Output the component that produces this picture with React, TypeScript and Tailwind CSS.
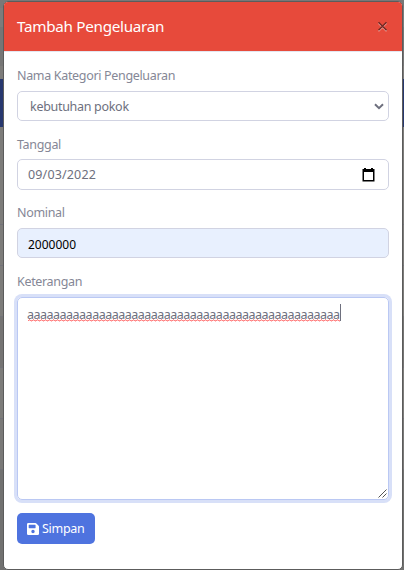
import React from 'react';

const label = 'block h-[20px] whitespace-nowrap text-[12.5px] leading-[20px] tracking-[-0.33px] text-[#858796]';

function Backdrop() {
  return (
    <div className="absolute inset-0 flex flex-col bg-[#7d7c7a]">
      <div className="h-[8px] bg-[#787878]" />
      <div className="h-[19px] bg-[#7c7c7c]" />
      <div className="h-[39px] bg-[#767676]" />
      <div className="h-[13px] bg-[#7d7c7a]" />
      <div className="h-[48px] bg-[#27386f]" />
      <div className="h-[98px] border-b border-[#73737a]" />
      <div className="h-[41px] border-b border-[#73737a]" />
      <div className="h-[51px] border-b border-[#73737a]" />
      <div className="h-[51px] border-b border-[#73737a] bg-[#757473]" />
      <div className="h-[51px] border-b border-[#73737a]" />
      <div className="h-[51px] border-b border-[#73737a] bg-[#7a7978]" />
      <div className="grow bg-[#717170]" />
    </div>
  );
}

function Squiggle() {
  return (
    <svg className="absolute top-[21px] left-[10px]" width="312" height="3">
      <defs>
        <pattern id="squiggle" width="4" height="3" patternUnits="userSpaceOnUse">
          <path d="M0 1.9 1 .9 2 .9 3 1.9 4 1.9" fill="none" stroke="#ff4a4a" strokeWidth="0.9" />
        </pattern>
      </defs>
      <rect width="312" height="3" fill="url(#squiggle)" />
    </svg>
  );
}

export default function App() {
  return (
    <div className="relative h-[570px] w-[404px] overflow-hidden font-['Noto_Sans','Open_Sans',sans-serif]">
      <Backdrop />
      <div className="relative pt-[1px] pl-[3px]">
        <div className="h-[569px] w-[400px] overflow-hidden rounded-[5px] border border-[#5c5c5c] bg-white">
          <header className="flex h-[50px] items-center justify-between border-b border-[#e3e6f0] bg-[#e74a3b] pr-[14px] pl-[13px] text-white">
            <h1 className="pb-[2px] text-[15.25px] leading-6 tracking-[-0.3px] whitespace-nowrap">Tambah Pengeluaran</h1>
            <svg width="11" height="11" viewBox="0 0 11 11" fill="none">
              <path d="M1.5 2.2 9.5 10.2M9.5 2.2 1.5 10.2" stroke="#fff" strokeOpacity=".55" strokeWidth="1.3" />
              <path d="M1.5 1.2 9.5 9.2M9.5 1.2 1.5 9.2" stroke="#742a25" strokeWidth="1.5" />
            </svg>
          </header>
          <form className="flex flex-col px-[13px] pt-[14px]">
            <span className={label}>Nama Kategori Pengeluaran</span>
            <div className="mt-[5px] flex h-[30px] items-center justify-between rounded-[5px] border border-[#d1d3e2] pr-[4px] pl-[12px] text-[12.5px] tracking-[-0.3px] text-[#6e707e]">
              <span className="pt-[2px]">kebutuhan pokok</span>
              <svg width="10" height="7" viewBox="0 0 10 7" fill="none">
                <path d="M1 1.2 5 5.2 9 1.2" stroke="#6e707e" strokeWidth="2" />
              </svg>
            </div>
            <span className={`${label} mt-[14px]`}>Tanggal</span>
            <div className="mt-[4px] flex h-[31px] items-center justify-between rounded-[5px] border border-[#d1d3e2] pr-[13px] pl-[10px] text-[12.5px] tracking-[0.15px] text-[#6e707e]">
              <span className="pt-[2px]">09/03/2022</span>
              <svg width="13" height="14" viewBox="0 0 13 14">
                <path d="M2 0h2v1h5V0h2v1h1.5v12.5H.5V1H2zM2 4v8h9V4z" fill="#000" fillRule="evenodd" />
              </svg>
            </div>
            <span className={`${label} mt-[13px]`}>Nominal</span>
            <div className="mt-[5px] flex h-[30px] items-center rounded-[5px] border border-[#d1d3e2] bg-[#e8f0fe] pt-[3px] pl-[10px] text-[12px] text-black">
              <span>2000000</span>
            </div>
            <span className={`${label} mt-[14px]`}>Keterangan</span>
            <div className="relative mt-[5px] h-[203px] rounded-[5px] border border-[#bac8f3] pt-[6px] pl-[9px] text-[12.5px] leading-[20px] tracking-[-0.5px] text-[#6e707e] shadow-[0_0_0_3px_#d8e0f8]">
              <div className="h-[17px] w-[314px] border-r border-[#6e707e] leading-[21px] whitespace-nowrap">
                {'a'.repeat(48)}
              </div>
              <Squiggle />
              <svg className="absolute right-[1px] bottom-[1px]" width="9" height="9" viewBox="0 0 9 9">
                <path d="M.5 8.5 8.5.5M4.5 8.5 8.5 4.5" stroke="#555" />
              </svg>
            </div>
            <button type="button" className="mt-[13px] flex h-[31px] w-[78px] items-center rounded-[5px] bg-[#4e73df] pl-[10px] text-[12.5px] tracking-[-0.3px] text-white">
              <svg width="12" height="12" viewBox="0 0 448 448">
                <path fill="#fff" fillRule="evenodd" d="M434 98 350 14A48 48 0 0 0 316 0H48A48 48 0 0 0 0 48v352a48 48 0 0 0 48 48h352a48 48 0 0 0 48-48V132a48 48 0 0 0-14-34zM224 384a64 64 0 1 1 0-128 64 64 0 0 1 0 128zM320 80v100a12 12 0 0 1-12 12H76a12 12 0 0 1-12-12V76a12 12 0 0 1 12-12h229z" />
              </svg>
              <span className="ml-[3px] pt-[2px]">Simpan</span>
            </button>
          </form>
        </div>
      </div>
    </div>
  );
}
